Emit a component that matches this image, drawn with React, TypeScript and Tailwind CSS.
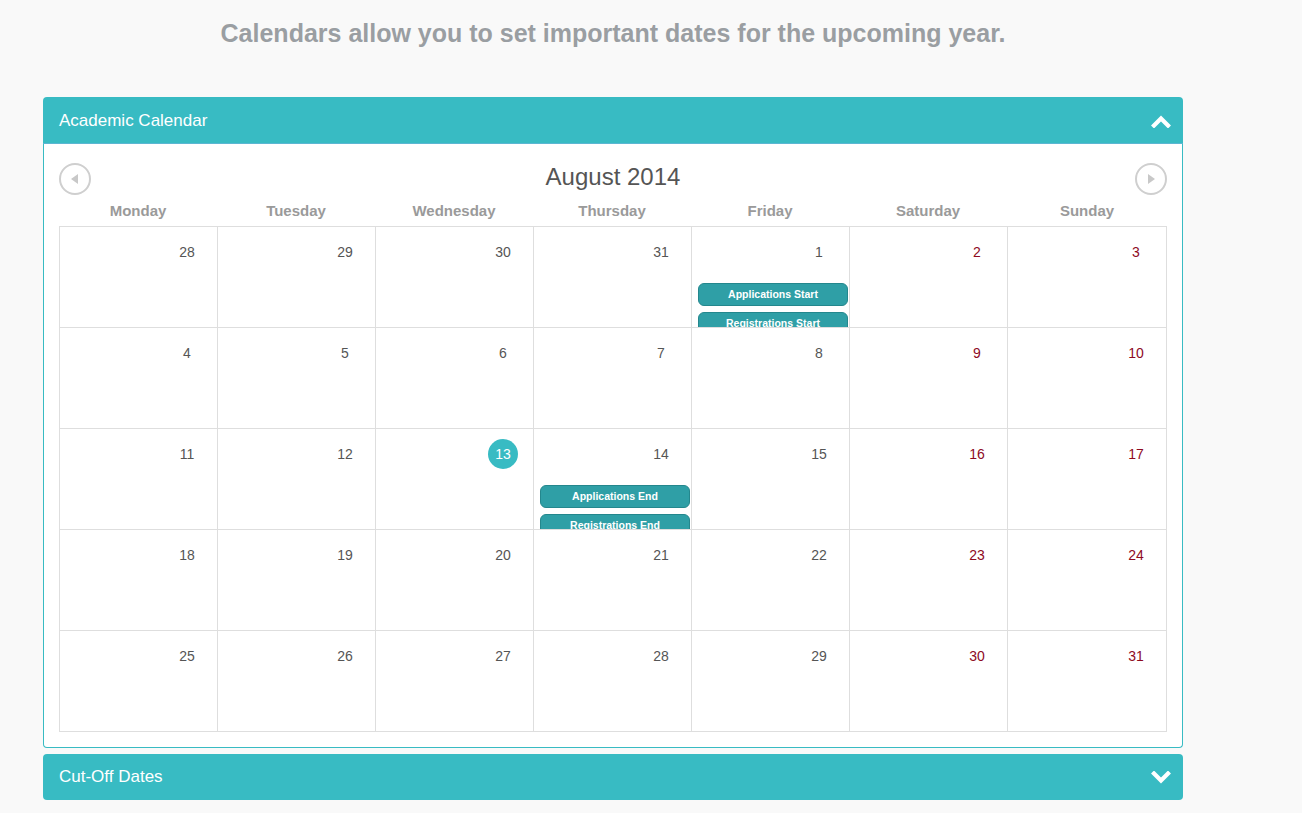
type Day = {
  n: number;
  today?: boolean;
  events?: string[];
};

const dayNames = ["Monday", "Tuesday", "Wednesday", "Thursday", "Friday", "Saturday", "Sunday"];

const weeks: Day[][] = [
  [{ n: 28 }, { n: 29 }, { n: 30 }, { n: 31 }, { n: 1, events: ["Applications Start", "Registrations Start"] }, { n: 2 }, { n: 3 }],
  [{ n: 4 }, { n: 5 }, { n: 6 }, { n: 7 }, { n: 8 }, { n: 9 }, { n: 10 }],
  [{ n: 11 }, { n: 12 }, { n: 13, today: true }, { n: 14, events: ["Applications End", "Registrations End"] }, { n: 15 }, { n: 16 }, { n: 17 }],
  [{ n: 18 }, { n: 19 }, { n: 20 }, { n: 21 }, { n: 22 }, { n: 23 }, { n: 24 }],
  [{ n: 25 }, { n: 26 }, { n: 27 }, { n: 28 }, { n: 29 }, { n: 30 }, { n: 31 }],
];

function Chevron({ up }: { up?: boolean }) {
  return (
    <svg width="20" height="13" viewBox="0 0 20 13" className="block">
      <polyline
        points={up ? "3,10.5 10,3.5 17,10.5" : "3,2.5 10,9.5 17,2.5"}
        fill="none"
        stroke="#fff"
        strokeWidth="4.2"
        strokeLinecap="square"
      />
    </svg>
  );
}

function NavButton({ dir }: { dir: "prev" | "next" }) {
  return (
    <div className="w-[32px] h-[32px] rounded-full border-2 border-[#cfcfcf] flex items-center justify-center">
      <svg width="12" height="12" viewBox="0 0 12 12">
        {dir === "prev" ? (
          <polygon points="9,1 9,11 2,6" fill="#c8c8c8" />
        ) : (
          <polygon points="3,1 3,11 10,6" fill="#c8c8c8" />
        )}
      </svg>
    </div>
  );
}

function Cell({ day, col }: { day: Day; col: number }) {
  const weekend = col >= 5;
  return (
    <div className="h-[101px] border-r border-b border-[#dedede] overflow-hidden">
      <div className="pt-[15px] pr-[15px] h-[35px] flex justify-end">
        {day.today ? (
          <span className="-mt-[5px] w-[30px] h-[30px] rounded-full bg-[#38bbc3] text-white text-[14px] flex items-center justify-center">
            {day.n}
          </span>
        ) : (
          <span
            className={`w-[30px] text-center text-[14px] leading-[20px] ${weekend ? "text-[#8e0a1e]" : "text-[#555]"}`}
          >
            {day.n}
          </span>
        )}
      </div>
      {day.events && (
        <div className="mt-[21px] ml-[6px] mr-[1px] flex flex-col gap-[6px]">
          {day.events.map((e) => (
            <div
              key={e}
              className="h-[23px] rounded-[6px] bg-[#2f9fa6] border border-[#24878d] text-white text-[10.5px] font-bold flex items-center justify-center"
            >
              {e}
            </div>
          ))}
        </div>
      )}
    </div>
  );
}

export default function App() {
  return (
    <div className="min-h-[813px] bg-[#f9f9f9] font-['Liberation_Sans',Arial,sans-serif]">
      <div className="w-[1140px] ml-[43px] pt-[17px]">
        <h1 className="text-center text-[25px] leading-[32px] font-bold text-[#9a9ea2] mb-[48px]">
          Calendars allow you to set important dates for the upcoming year.
        </h1>

        <div>
          <div className="h-[47px] bg-[#38bbc3] rounded-t-[4px] border-b border-[#5cb6d2] px-[16px] flex items-center justify-between">
            <span className="text-white text-[17px] mt-[1px]">Academic Calendar</span>
            <span className="mr-[-4px] mt-[2px]">
              <Chevron up />
            </span>
          </div>
          <div className="bg-white border border-t-0 border-[#38bbc3] rounded-b-[4px] pt-[19px] px-[15px] pb-[15px]">
            <div className="grid grid-cols-[32px_1fr_32px] items-center h-[32px]">
              <NavButton dir="prev" />
              <div className="text-center text-[24px] text-[#555] -mt-[4px]">August 2014</div>
              <NavButton dir="next" />
            </div>
            <div className="grid grid-cols-[repeat(6,158px)_1fr] h-[31px] items-center pt-[2px]">
              {dayNames.map((d) => (
                <div key={d} className="text-center text-[15px] font-bold text-[#9a9a9a]">
                  {d}
                </div>
              ))}
            </div>
            <div className="grid grid-cols-[repeat(6,158px)_1fr] border-l border-t border-[#dedede]">
              {weeks.map((w, wi) =>
                w.map((d, di) => <Cell key={`${wi}-${di}`} day={d} col={di} />)
              )}
            </div>
          </div>
        </div>

        <div className="mt-[6px] h-[46px] bg-[#38bbc3] rounded-[4px] px-[16px] flex items-center justify-between">
          <span className="text-white text-[17px]">Cut-Off Dates</span>
          <span className="mr-[-4px]">
            <Chevron />
          </span>
        </div>
      </div>
    </div>
  );
}
